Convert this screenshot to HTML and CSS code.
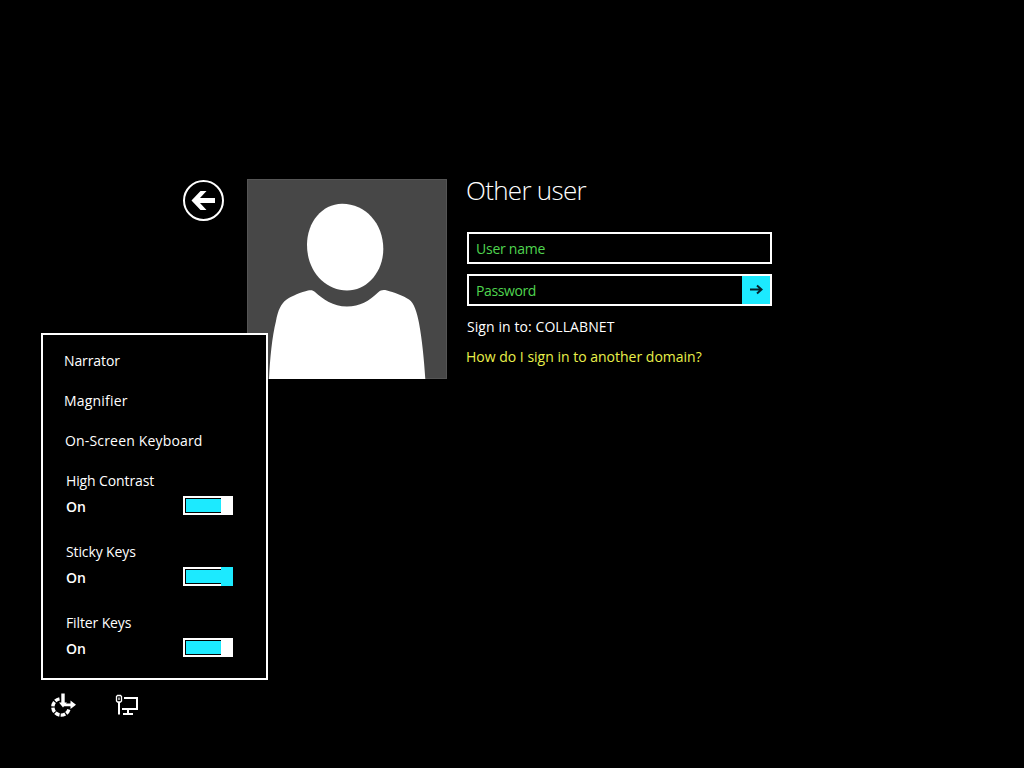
FILE: index.html
```html
<!DOCTYPE html>
<html lang="en">
<head>
    <meta charset="UTF-8">
    <meta name="viewport" content="width=device-width, initial-scale=1.0">
    <title>Sign in</title>
    <link rel="stylesheet" href="styles.css">
</head>
<body>
    <main class="signin">
        <button class="back-btn" type="button" aria-label="Back">
            <svg width="42" height="42" viewBox="0 0 42 42">
                <circle cx="20.5" cy="21.5" r="19.5" fill="none" stroke="#fff" stroke-width="2"/>
                <path d="M8.5 21.500 L17.5 12 H23.5 L17 19 H32 V24 H17 L23.5 31 H17.5 Z" fill="#fff"/>
            </svg>
        </button>

        <svg class="avatar" width="200" height="200" viewBox="0 0 200 200">
            <rect x="0.5" y="0.5" width="199" height="199" fill="#474747" stroke="#555"/>
            <path d="M95 24.7 C118 24.5 136.3 44 136.3 70 C136.3 93 120 111.5 100 111.5 C78 111.5 60 92 60 66 C60 43 75 25 95 24.7 Z" fill="#fff"/>
            <path d="M22 200 C23 180 25 158 29 142 C31 131 34 125 39 121 C44 117 55 113 61 111.5 C64 110.8 66 111 68 113 C76 120 86 127.500 100 127.500 C113 127.500 122 122 131 113.500 C134 111 136 110.500 140 111.500 C146 113 157 117 162 120.500 C167 124 170 133 172 144 C175 160 177 180 178.300 200 Z" fill="#fff"/>
        </svg>

        <form class="credentials">
            <h1 class="title">Other user</h1>
            <div class="field">
                <input class="field-input user-input" type="text" placeholder="User name" aria-label="User name">
            </div>
            <div class="field">
                <input class="field-input password-input" type="password" placeholder="Password" aria-label="Password">
                <button class="submit-btn" type="button" aria-label="Submit">
                    <svg width="28" height="28" viewBox="0 0 28 28">
                        <path d="M8 13.500 H19.500 M15 9.500 L19.500 13.500 L15 17.500" fill="none" stroke="#06222b" stroke-width="2"/>
                    </svg>
                </button>
            </div>
            <p class="domain">Sign in to: COLLABNET</p>
            <a class="help-link">How do I sign in to another domain?</a>
        </form>
    </main>

    <footer class="tray">
        <div class="ease-menu">
            <div class="menu-item narrator">Narrator</div>
            <div class="menu-item magnifier">Magnifier</div>
            <div class="menu-item keyboard">On-Screen Keyboard</div>
            <div class="option">
                <div class="option-label">High Contrast</div>
                <div class="option-row">
                    <span class="option-state">On</span>
                    <span class="toggle"><span class="toggle-fill"></span><span class="toggle-thumb"></span></span>
                </div>
            </div>
            <div class="option">
                <div class="option-label">Sticky Keys</div>
                <div class="option-row">
                    <span class="option-state">On</span>
                    <span class="toggle toggle-hover"><span class="toggle-fill"></span><span class="toggle-thumb"></span></span>
                </div>
            </div>
            <div class="option">
                <div class="option-label">Filter Keys</div>
                <div class="option-row">
                    <span class="option-state">On</span>
                    <span class="toggle"><span class="toggle-fill"></span><span class="toggle-thumb"></span></span>
                </div>
            </div>
        </div>

        <!-- Ease of access -->
        <svg class="tray-icon" width="28" height="26" viewBox="0 0 28 26">
            <path d="M9.500 5.900 A8.200 8.200 0 1 0 19 16" fill="none" stroke="#fff" stroke-width="3.400" stroke-dasharray="4.700 1.200"/>
            <path d="M11.300 0.500 H14.700 V9.500 H17 L13 14.500 L9 9.500 H11.300 Z" fill="#fff"/>
            <path d="M14 10.400 H20.500 V7.600 L26 11.800 L20.500 16 V13.200 H14 Z" fill="#fff"/>
        </svg>
        <!-- Network -->
        <svg class="tray-icon" width="26" height="26" viewBox="0 0 26 26">
            <path d="M2.500 2.500 H5.500 L6.500 3.500 V8 L5.500 9 H2.500 L1.500 8 V3.500 Z" fill="none" stroke="#fff" stroke-width="1.300"/>
            <path d="M4 4.500 V7" fill="none" stroke="#fff" stroke-width="1.200"/>
            <path d="M4 9 V21.500 M9 5 H22 V16 H7 M13 16 V20 M8 21 H18" fill="none" stroke="#fff" stroke-width="2"/>
        </svg>
    </footer>
</body>
</html>
```
FILE: styles.css
```css
* {
    margin: 0;
    padding: 0;
    box-sizing: border-box;
}

body {
    display: flex;
    flex-direction: column;
    justify-content: space-between;
    height: 100vh;
    overflow: hidden;
    background: #000;
    color: #fff;
    font-family: 'Open Sans', 'Noto Sans', sans-serif;
    font-size: 14px;
}

svg {
    display: block;
}

button {
    border: none;
    background: none;
    cursor: pointer;
}

.signin {
    display: flex;
    align-items: flex-start;
    padding: 179px 0 0 183px;
}

.back-btn {
    width: 42px;
    height: 42px;
    margin-right: 22px;
}

.avatar {
    margin-right: 20px;
}

.credentials {
    width: 305px;
}

.title {
    height: 53px;
    font-size: 26px;
    line-height: 22px;
    font-weight: 300;
    letter-spacing: -0.7px;
    margin-left: -1px;
    white-space: nowrap;
}

.field {
    display: flex;
    height: 32px;
    margin-bottom: 10px;
    border: 2px solid #fff;
}

.field-input {
    flex: 1;
    min-width: 0;
    padding: 0 7px;
    border: none;
    outline: none;
    background: #000;
    color: #fff;
    font: inherit;
}

.field-input::placeholder {
    color: #4fd44f;
    opacity: 1;
}

.user-input {
    letter-spacing: -0.25px;
}

.password-input {
    letter-spacing: -0.4px;
}

.submit-btn {
    width: 28px;
    height: 28px;
    background: #1ceaff;
}

.domain {
    height: 31px;
    padding-top: 1px;
    line-height: 20px;
    letter-spacing: 0.08px;
}

.help-link {
    display: inline-block;
    margin-left: -1px;
    line-height: 20px;
    color: #e9f04a;
    white-space: nowrap;
}

.tray {
    position: relative;
    display: flex;
    gap: 37px;
    padding: 0 0 49px 50px;
}

.ease-menu {
    position: absolute;
    left: 41px;
    bottom: 88px;
    width: 227px;
    height: 347px;
    padding: 6px 33px 0 21px;
    border: 2px solid #fff;
    background: #000;
}

.menu-item {
    height: 40px;
    line-height: 40px;
}

.narrator {
    letter-spacing: -0.1px;
}

.magnifier {
    letter-spacing: 0.2px;
}

.keyboard {
    padding-left: 1px;
    letter-spacing: 0.17px;
}

.option {
    height: 71px;
    padding: 10px 0 0 2px;
}

.option-label {
    height: 20px;
    line-height: 20px;
    letter-spacing: -0.12px;
}

.option-row {
    display: flex;
    justify-content: space-between;
    align-items: center;
    height: 31px;
}

.option-state {
    font-weight: 600;
}

.toggle {
    display: flex;
    width: 50px;
    height: 19px;
    margin-bottom: 2px;
}

.toggle-fill {
    width: 38px;
    border: 2px solid #fff;
    border-right: none;
    background: #1ceaff;
    box-shadow: inset 1px 1px #000, inset 0 -1px #000;
}

.toggle-thumb {
    width: 12px;
    background: #fff;
}

.toggle-hover .toggle-thumb {
    background: #1ceaff;
}
```
